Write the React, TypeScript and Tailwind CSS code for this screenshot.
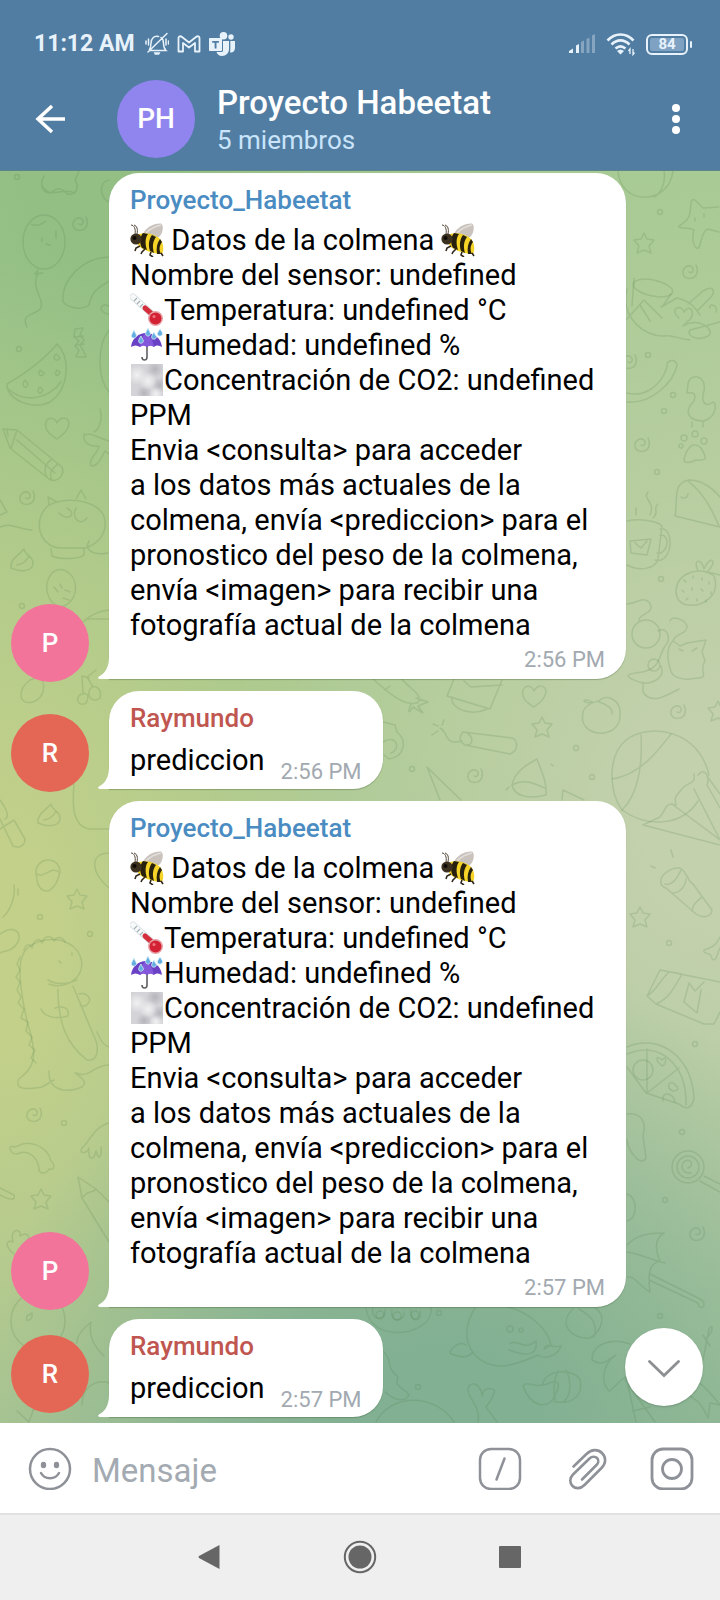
import React from "react";

type Author = { name: string; initial: string; nameClass: string; avatarClass: string };

const BOT: Author = {
  name: "Proyecto_Habeetat",
  initial: "P",
  nameClass: "text-[#4a8cc2]",
  avatarClass: "bg-[#f2749a]",
};
const RAY: Author = {
  name: "Raymundo",
  initial: "R",
  nameClass: "text-[#bf5650]",
  avatarClass: "bg-[#e46756]",
};

function Bee() {
  return (
    <svg viewBox="0 0 34 34" role="img" aria-label="abeja" className="inline-block size-[34px] align-top">
      <path d="M13 11C15 5 24 0 31 0.5C34 2 33 11 29 14C24 16 17 15 13 11Z" fill="#c9c2bd" />
      <path d="M16 10C20 6 26 3 31 2" stroke="#e4dfdb" strokeWidth="1.5" fill="none" />
      <path d="M9 11C15 9 24 11 29 15C34 19 34 28 32 31C25 31 15 28 10 24C6 20 5 14 9 11Z" fill="#f5d327" />
      <path d="M13 10L18 11C15 15 15 21 17 27L12 25C9 20 10 14 13 10ZM22 12L26 14C23 18 22 23 24 30L20 28C18 22 19 16 22 12ZM30 16L32 19C29 23 29 27 31 31L27 31C26 25 27 20 30 16Z" fill="#27200f" />
      <circle cx="6" cy="16" r="5.600" fill="#3c3020" />
      <circle cx="4.500" cy="15" r="2" fill="#0d0a07" />
      <path d="M5 11C6 6 4 2 1 2M7 11C8 6 7 3 4 2" stroke="#54473a" strokeWidth="1" fill="none" />
      <path d="M10 23L6 25L5 28M15 26L12 29L11 31M21 29L20 32L23 34M31 30L33 33" stroke="#30261a" strokeWidth="1.600" fill="none" />
    </svg>
  );
}

function Thermometer() {
  return (
    <svg viewBox="0 0 34 34" role="img" aria-label="termómetro" className="inline-block size-[34px] align-top">
      <path d="M3 4L23 22" stroke="#dbe3e5" strokeWidth="7" strokeLinecap="round" />
      <path d="M3 4L22 21" stroke="#f8fafa" strokeWidth="5" strokeLinecap="round" />
      <path d="M4 8L7 5M7 11L10 8M10 14L13 11" stroke="#a5b1b6" strokeWidth="1.200" />
      <path d="M15 15L23 22" stroke="#d42d3c" strokeWidth="5" strokeLinecap="round" />
      <circle cx="25.500" cy="25.500" r="7.500" fill="#e7a3a8" />
      <circle cx="25.500" cy="25.500" r="6" fill="#d22233" />
      <circle cx="24" cy="23.500" r="1.500" fill="#ef7580" />
    </svg>
  );
}

function Umbrella() {
  return (
    <svg viewBox="0 0 34 34" role="img" aria-label="paraguas con lluvia" className="inline-block size-[34px] align-top">
      <path d="M17 18V29C17 33 12 33 12 29" stroke="#5f6064" strokeWidth="1.600" fill="none" />
      <path d="M1 19C2 10 9 5 16 5C24 5 31 10 32 19C29 17 26 17 24 19C21 17 19 17 17 19C14 17 12 17 10 19C7 17 4 17 1 19Z" fill="#6a41c4" />
      <path d="M10 19C10 12 13 7 16 5C20 8 23 12 24 19C21 17 19 17 17 19C14 17 12 17 10 19Z" fill="#8358da" />
      <path d="M4 2C2 6 1 7 1.500 9C3 11 6 10 6.500 8C6.500 6 5 5 4 2ZM18 0C16 4 15 5 16 7C18 9 20 8 20.500 6C20.500 4 19 3 18 0ZM30 1C28 4 27 5 27.500 7C29 9 32 8 32.500 6C32.500 4 31 3 30 1ZM11 8C9 11 8 13 9 14.500C11 16 13 15 13.500 13C13.500 12 12 11 11 8ZM24 4C22 7 21 9 22 10.500C24 12 26 11 26.500 9C26.500 8 25 7 24 4Z" fill="#63aede" stroke="#d8effa" strokeWidth="0.800" />
    </svg>
  );
}

function Fog() {
  return (
    <svg viewBox="0 0 34 34" role="img" aria-label="niebla" className="inline-block size-[34px] align-top">
      <defs>
        <radialGradient id="fogLight">
          <stop offset="0" stopColor="#f1f1f3" />
          <stop offset="1" stopColor="#f1f1f3" stopOpacity="0" />
        </radialGradient>
        <radialGradient id="fogDark">
          <stop offset="0" stopColor="#b4b4bb" />
          <stop offset="1" stopColor="#b4b4bb" stopOpacity="0" />
        </radialGradient>
        <clipPath id="fogEdge">
          <rect x="1" y="1" width="32" height="32" />
        </clipPath>
      </defs>
      <g clipPath="url(#fogEdge)">
        <rect width="34" height="34" fill="#d4d4d8" />
        <circle cx="25" cy="6" r="9" fill="url(#fogDark)" />
        <circle cx="30" cy="22" r="8" fill="url(#fogDark)" />
        <circle cx="14" cy="30" r="8" fill="url(#fogDark)" />
        <circle cx="7" cy="12" r="10" fill="url(#fogLight)" />
        <circle cx="18" cy="18" r="9" fill="url(#fogLight)" />
        <circle cx="26" cy="31" r="7" fill="url(#fogLight)" />
      </g>
    </svg>
  );
}

const REPORT: React.ReactNode[] = [
  <><Bee /> Datos de la colmena <Bee /></>,
  <>Nombre del sensor: undefined</>,
  <><Thermometer />Temperatura: undefined °C</>,
  <><Umbrella />Humedad: undefined %</>,
  <><Fog />Concentración de CO2: undefined</>,
  <>PPM</>,
  <>Envia &lt;consulta&gt; para acceder</>,
  <>a los datos más actuales de la</>,
  <>colmena, envía &lt;prediccion&gt; para el</>,
  <>pronostico del peso de la colmena,</>,
  <>envía &lt;imagen&gt; para recibir una</>,
  <>fotografía actual de la colmena</>,
];

function Message({ author, time, lines, last }: { author: Author; time: string; lines: React.ReactNode[]; last?: boolean }) {
  const short = lines.length === 1;
  return (
    <li className="flex items-end gap-5 pl-[11px]">
      <div
        className={`flex size-[78px] shrink-0 items-center justify-center rounded-full text-[26px] font-medium text-white ${author.avatarClass} ${last ? "mb-1" : "-mb-[3px]"}`}
      >
        {author.initial}
      </div>
      <article
        className={`relative rounded-[30px] rounded-bl-none bg-white px-[21px] pt-3 shadow-[0_1px_1px_rgba(60,90,50,0.35)] ${short ? "pb-[11px]" : "w-[517px] pb-0.5"}`}
      >
        <svg viewBox="0 0 12 22" className="absolute bottom-0 -left-[11px] h-[22px] w-3 fill-white" aria-hidden="true">
          <path d="M12 0H11C11 9 8 16 1 19.500C-0.500 20.500 0 22 2 22H12Z" />
        </svg>
        <h2 className={`text-[26px] leading-[31px] font-medium ${author.nameClass}`}>{author.name}</h2>
        <div className={short ? "mt-[9px] flex items-end gap-4" : "mt-[7px]"}>
          <div className="text-[29px] leading-[35px] whitespace-nowrap text-black">
            {lines.map((line, i) => (
              <p key={i} className="h-[35px]">{line}</p>
            ))}
          </div>
          <time className={`block text-right text-[22px] leading-[34px] text-[#a2a9b0] ${short ? "-mb-[11px]" : ""}`}>{time}</time>
        </div>
      </article>
    </li>
  );
}

const SPIRAL = "M-1 1C2 3 5-1 2-4C-2-7-8-3-7 3C-5 9 5 9 7 2C8-1 7-4 6-6";
const STAR = "M0-10L3-4L10-3L5 3L7 10L0 7L-7 10L-5 3L-10-3L-3-4Z";
const HEART = "M0 12C-7 8-13 2-11-5C-8-11-2-9 0-4C4-11 11-10 12-4C12 3 6 8 0 12Z";
const LEAF = "M-12 8C-13-1-5-4 1-11C2-4 11-4 10 4C9 12-3 12-12 8ZM-6 5C0 4 4 0 6-4";

function Doodles() {
  const at = (d: string, pts: number[][]) =>
    pts.map(([x, y]) => <path key={`${x}-${y}`} d={d} transform={`translate(${x} ${y})`} />);
  return (
    <svg
      viewBox="0 171 720 1252"
      preserveAspectRatio="xMidYMin slice"
      className="absolute inset-0 size-full fill-none stroke-[#4c7a4a]/18 stroke-[1.5]"
      strokeLinecap="round"
      strokeLinejoin="round"
      aria-hidden="true"
    >
      {at(SPIRAL, [[80, 223], [27, 497], [34, 1114], [690, 271], [642, 444], [678, 711], [475, 775], [697, 1233], [629, 361]])}
      {at(STAR, [[644, 243], [542, 727], [640, 917], [77, 899], [41, 1199], [718, 711]])}
      {at(HEART, [[57, 427], [534, 695]])}
      {at(LEAF, [[23, 560], [50, 815]])}
      {[[17, 177], [19, 349], [22, 606], [660, 212], [648, 355], [673, 395], [664, 411], [657, 472], [661, 579], [576, 748], [592, 777], [412, 769], [669, 943], [695, 1044], [682, 1132], [665, 1200], [40, 917], [90, 934], [64, 1123], [660, 1316], [418, 1387], [439, 1313]].map(([x, y]) => (
        <circle key={`${x}-${y}`} cx={x} cy={y} r="2.500" />
      ))}
      <path d="M44 176C38 186 45 196 52 192C58 187 62 188 67 194C76 196 80 187 75 180L79 171M43 187C50 199 62 187 75 193" />
      <ellipse cx="44" cy="242" rx="21" ry="27" />
      <path d="M31 224C37 228 43 223 46 221M56 231V238M42 238V241M46 244L50 245M38 270L35 274L43 273M38 273C30 290 45 298 41 308C35 316 20 313 27 327" />
      <path d="M109 257C82 258 61 280 63 302C70 309 82 310 89 305C92 290 100 287 109 281M109 306C99 302 98 313 109 314M109 180C98 182 100 198 109 202M109 330C97 345 97 378 109 392" />
      <path d="M57 344C48 355 31 370 7 384C6 399 32 411 50 402C68 390 72 360 57 344ZM7 388C25 405 49 398 61 382M25 380C20 386 27 391 28 384ZM40 370C36 375 43 378 44 373ZM56 354C51 358 57 363 60 358ZM40 387C35 392 41 396 43 390ZM57 370C53 375 58 378 60 372Z" />
      <path d="M75 329L83 328L80 335L84 340L80 345L84 352L86 357L76 357L79 350L75 346L79 341L74 337ZM75 337L83 336M77 345L84 344" />
      <path d="M3 429L17 430L62 467C65 474 58 484 49 479L10 448ZM7 430L8 436M17 430L11 448M17 440L55 473M51 460C44 464 44 472 47 477M58 464C51 469 49 475 52 480" />
      <path d="M84 434C82 444 92 447 99 446C98 454 88 458 91 466C98 467 102 456 105 451L109 454M84 435C93 432 97 438 109 441M100 409C103 419 99 430 94 432" />
      <path d="M49 505C33 517 37 546 60 548H85C108 541 111 516 96 507C82 498 62 499 49 505ZM49 505L48 497L57 502M76 499L81 490L86 499M59 513C69 523 77 513 67 508M76 508C71 518 80 527 87 518M51 549L52 556C60 560 80 559 84 555V548M89 541C84 550 93 556 108 553" />
      <path d="M0 500L7 512L0 515M0 527C12 522 20 530 32 530" />
      <path d="M52 573C42 585 47 604 61 607C77 603 80 582 69 573C63 568 56 569 52 573ZM54 587L58 592M60 584L62 588M63 598L69 600M65 590L70 592M82 623C89 616 98 611 109 610M86 619L109 619" />
      <path d="M82 694C73 697 79 708 86 703C90 696 87 692 82 694ZM92 687C84 693 92 705 100 698C102 690 97 685 92 687ZM83 693L82 676L89 678M93 687L87 677L96 670M30 680C18 688 17 706 33 702C46 697 46 681 39 677Z" />
      <path d="M0 800C6 808 10 817 5 819M0 819L13 846C20 849 25 845 25 839L14 820L0 829M74 783C72 808 73 826 89 829H109M109 853C91 853 89 871 109 888" />
      <path d="M36 873C35 858 58 854 60 871C58 884 51 892 45 891C38 889 37 882 36 873ZM36 873C43 881 51 864 60 873M14 885C16 897 10 911 3 917M18 889V895M0 934C13 925 22 931 18 942C12 952 6 950 0 953" />
      <path d="M22 957C26 942 48 937 63 941C81 947 86 964 78 976C71 985 58 988 49 984M22 957C17 970 22 1005 31 1035C36 1057 35 1067 19 1079C13 1091 30 1089 42 1087L54 1080M49 1071C48 1090 65 1094 82 1087C89 1082 80 1077 75 1073M58 989C58 1022 66 1044 87 1060C100 1062 99 1045 93 1034L73 986M41 1009C46 1020 62 1018 68 1016C70 1007 62 1006 55 1008M79 994C87 992 91 998 89 1002C85 1009 80 1005 80 1005M76 1073C90 1079 93 1065 109 1065M97 1032C101 1041 103 1045 109 1047M48 980C58 986 70 983 77 980M59 961L61 963M72 953V955" />
      <path d="M24 950C26 944 30 943 32 948C34 938 41 938 42 943C45 934 52 936 54 941C58 934 64 939 65 942M20 957L17 964L20 970L16 977L20 982L17 990L21 997L18 1003L24 1009L21 1018L28 1022L26 1031L32 1037L29 1045L35 1050L31 1058L36 1063" />
      <path d="M14 1147C7 1143 10 1155 17 1154C27 1149 37 1156 39 1168C38 1175 47 1174 49 1169C56 1171 54 1163 51 1161C47 1144 26 1140 18 1146Z" />
      <path d="M109 1123C94 1127 90 1141 82 1148C78 1156 89 1152 89 1148C88 1162 94 1160 96 1151C99 1162 102 1156 101 1147M78 1177L96 1189L109 1202M78 1177L82 1198L109 1242M82 1198C90 1188 93 1194 96 1189M0 1188L14 1195C16 1201 9 1200 0 1195M14 1254C5 1247 5 1239 13 1242C9 1228 22 1228 20 1236C30 1230 31 1240 25 1243" />
      <ellipse cx="38" cy="1321" rx="27" ry="29" />
      <path d="M27 1316C25 1324 33 1320 32 1313ZM77 1343C76 1335 86 1326 91 1322C88 1336 95 1348 104 1356M17 1411L29 1422L35 1405M82 1405C83 1378 109 1380 109 1384" />
      <path d="M618 171C620 206 669 206 673 171M664 171C666 183 661 193 654 197M691 203Q692 197 696 201L703 208L719 207M691 203C690 214 691 219 679 226C677 229 690 227 694 230C690 243 698 255 700 244C703 235 704 230 708 229L719 232M695 218V221M704 214V217" />
      <ellipse cx="653" cy="288" rx="20" ry="8" transform="rotate(12 653 288)" />
      <path d="M627 289C620 319 646 337 664 336M627 319L644 300L662 318M634 278L632 306M640 305L650 321M671 294L662 307M679 318C668 309 681 303 684 312C692 301 696 317 688 321L683 326C700 315 719 333 706 337C696 341 686 335 690 330L720 322M661 307L677 298C690 301 694 306 700 315M688 304L703 291C714 284 717 292 708 300L697 311M710 308C709 302 719 306 716 312M664 336C672 334 678 339 690 340" />
      <path d="M627 402C653 404 674 381 677 365C675 358 666 360 667 367C660 389 642 397 627 393M687 393C691 393 697 391 694 401C682 413 690 421 704 421C718 416 716 402 713 402C704 409 701 400 704 391C707 374 689 373 688 384ZM692 422V427M703 422V427" />
      <path d="M684 459C687 448 693 440 701 448C707 458 708 461 696 460C688 464 684 463 684 459Z" />
      <circle cx="684" cy="438" r="3" /><circle cx="695" cy="434" r="3" /><circle cx="704" cy="441" r="3" /><circle cx="681" cy="446" r="2" />
      <path d="M675 516C678 500 672 483 689 480C703 480 714 490 720 497M675 516L720 527M688 481C703 493 711 507 719 526M681 497C685 499 687 498 688 494" />
      <path d="M627 521C640 518 657 521 662 526L658 559C655 570 638 571 627 565M660 535C672 534 667 556 657 553M660 529C675 526 673 565 655 560M630 541L651 539L647 555L631 553ZM635 543L641 548L647 541M648 492C642 499 656 502 650 515M658 504C652 508 660 512 653 518M636 508V515" />
      <path d="M676 590C678 572 700 566 714 576C721 595 703 607 688 605C680 604 676 599 676 590ZM698 571C692 559 702 558 704 569C710 554 719 561 707 572L720 575" />
      <path d="M684 580L686 582M693 576V578M702 578V580M709 582V584M682 590L684 592M692 588V590M701 589L703 591M711 592V594M686 600L688 598M697 599V601M706 600V602" />
      <circle cx="646" cy="634" r="14" />
      <path d="M627 604C640 602 642 597 649 602C657 614 639 613 639 620M658 631C669 625 671 642 665 646C658 657 661 668 642 672C623 674 624 677 642 683C652 684 666 678 661 666M670 621C671 615 685 619 687 626C687 635 675 633 673 641M673 641L680 646L687 643L706 640L702 652L705 661C698 672 710 677 698 678C683 681 671 678 670 668C666 656 668 645 673 641M679 649L683 651M692 651L697 648M643 682V692C651 705 666 696 679 689" />
      <circle cx="654" cy="665" r="6" />
      <path d="M583 713C577 737 618 741 620 717C622 699 606 693 599 701C592 702 584 706 583 713ZM592 703C580 703 583 697 592 702M599 702C607 704 613 709 612 714" />
      <path d="M622 810C609 792 607 756 626 740C650 722 699 730 709 775M622 810C649 829 683 825 698 801" />
      <path d="M612 779C641 775 660 748 671 734M641 735C643 770 636 797 622 810M698 775C705 766 710 778 707 785L720 808M694 774C696 786 688 780 681 790C676 797 674 795 676 805C664 802 667 809 660 817L643 825L720 845M694 789L720 840M672 804L720 840M707 776L720 794" />
      <path d="M661 883C659 876 670 867 680 868C689 874 686 880 693 884L712 910C711 918 702 918 696 914L666 888C663 887 661 886 661 883ZM665 884C674 887 679 874 681 870M672 893C683 893 686 882 686 879M692 911C693 901 701 900 702 896M651 866L655 868M671 850L673 857" />
      <path d="M647 996L660 970L720 982M720 1012L714 1024H704L656 1004L647 996M660 970L682 974C673 990 669 998 656 1004M669 972C660 980 657 990 647 996M689 983L684 1002L697 1013L701 990M689 983L695 991L704 982M720 937C717 942 717 946 704 950C703 956 711 950 712 959C717 963 718 950 720 948" />
      <path d="M627 1047C655 1034 691 1052 694 1098C692 1109 686 1110 679 1104L646 1093L627 1067M627 1054C661 1040 687 1066 686 1105M647 1049V1093L679 1068" />
      <circle cx="643" cy="1070" r="10" /><path d="M658 1062C655 1055 660 1058 662 1060C667 1054 667 1064 662 1066ZM669 1088C667 1082 673 1081 676 1086C682 1089 673 1094 669 1088ZM663 1101C661 1090 674 1093 675 1102M627 1114C641 1112 647 1122 643 1136L646 1158C640 1168 628 1150 627 1140" />
      <circle cx="688" cy="1167" r="16" /><circle cx="688" cy="1167" r="11" />
      <path d="M688 1168C694 1166 692 1158 685 1161C679 1166 683 1174 691 1173M704 1176L720 1184M700 1181L720 1192M627 1194C638 1197 638 1219 627 1221M627 1245C636 1235 649 1233 664 1233C652 1240 657 1254 660 1261C651 1263 647 1270 650 1292C637 1284 635 1276 627 1277M627 1252C640 1254 652 1260 665 1263M650 1274L702 1300C708 1307 699 1311 698 1303L649 1280" />
      <path d="M366 1308C370 1344 428 1336 431 1312V1306M373 1307C370 1323 387 1320 385 1310M392 1310C389 1324 405 1322 404 1312M411 1310C410 1325 423 1321 420 1311" />
      <circle cx="380" cy="1315" r="4" /><circle cx="397" cy="1316" r="4" /><circle cx="415" cy="1315" r="4" />
      <path d="M475 1308C455 1340 475 1367 503 1366C516 1365 529 1359 538 1355C544 1360 558 1356 561 1346C553 1349 547 1341 544 1349L551 1345C548 1329 528 1311 507 1307M466 1345C459 1340 447 1351 451 1354C461 1357 467 1359 473 1352M510 1343C520 1340 525 1351 536 1341C538 1355 528 1357 509 1350" />
      <circle cx="510" cy="1329" r="3" /><circle cx="521" cy="1330" r="2" />
      <path d="M573 1309C557 1324 572 1340 590 1338C602 1331 607 1315 595 1308M579 1309C593 1317 598 1325 594 1337" />
      <path d="M542 1385C547 1368 572 1369 580 1379C584 1397 571 1404 556 1402M566 1370C572 1382 571 1397 563 1402M558 1371C554 1378 553 1386 555 1402M523 1386C528 1379 534 1391 552 1382C559 1380 560 1386 556 1393C550 1412 530 1407 523 1386Z" />
      <path d="M592 1360C592 1342 615 1338 630 1344M592 1360C604 1367 605 1361 616 1355C603 1363 600 1382 609 1391C614 1389 619 1380 626 1377L636 1422M625 1380L655 1422M632 1411L650 1407M703 1360L709 1329C713 1323 714 1330 707 1338M703 1335L710 1346M698 1382C706 1387 712 1395 720 1405L710 1403L708 1418C703 1409 702 1403 690 1396" />
      <path d="M384 1352C394 1362 384 1365 398 1377C394 1388 403 1386 409 1395C404 1404 393 1399 385 1392M376 1422C391 1393 435 1393 454 1422M478 1422C482 1405 462 1394 470 1385C477 1380 482 1391 482 1396C483 1385 498 1388 494 1393C492 1400 488 1404 486 1407L497 1422" />
      <path d="M373 679C391 695 404 706 417 703C425 695 408 688 402 679M385 690L390 686M416 698L428 702L418 706L423 713L413 707C409 713 407 715 411 704M454 679L447 696L490 709L502 680M464 681L471 687L502 685M452 697C450 710 473 716 487 709" />
      <path d="M463 732C458 738 460 742 465 745L510 754C520 750 517 739 512 738ZM467 733C475 738 472 746 466 745M462 741C443 746 449 732 440 728M438 726L433 724M438 731L432 735M442 725L444 720M427 767L434 774L461 800M427 767L440 800M512 785C515 770 530 763 537 759C541 771 547 781 546 795C526 800 514 795 512 785ZM512 785C525 778 535 784 545 788M509 787L506 790M551 764L553 766M562 800L563 790L584 800M383 722L395 725L397 732C408 741 404 757 389 759L384 755M383 742C397 733 401 750 391 753" />
    </svg>
  );
}

function StatusBar() {
  return (
    <div className="flex h-[68px] items-center justify-between pt-5 pr-7 pl-[34px] text-[#e8f2fb]">
      <div className="flex items-center">
        <span className="text-[23px] leading-7 font-bold">11:12 AM</span>
        <svg viewBox="0 0 24 24" className="ml-2.5 size-6 fill-none stroke-current stroke-[1.5]" aria-hidden="true">
          <path d="M5 18.500H21C19 16.500 18.500 15 18.500 11C18.500 8.500 17.500 6.500 16 5.500M13.500 4.500C9 3 6 7 6 11C6 15 5.500 16 4.500 17.500M22 1.500L3 20M3.500 7V13M1 9V12M21 7V13M23.500 9V12" strokeLinecap="round" />
          <path d="M9 20.500H15L14 22.500H10Z" fill="currentColor" strokeWidth="0.500" />
        </svg>
        <svg viewBox="0 0 24 18" className="ml-2 h-[18px] w-6 fill-none stroke-current stroke-[1.800]" aria-hidden="true">
          <path d="M1.500 16.500V3C1.500 1 3.500 0.800 5 2L12 7.500L19 2C20.500 0.800 22.500 1 22.500 3V16.500H18V8L12 12.500L6 8V16.500Z" strokeLinejoin="round" />
        </svg>
        <svg viewBox="0 0 26 24" className="ml-2 h-6 w-[26px] fill-current" aria-hidden="true">
          <circle cx="14.500" cy="3.800" r="3.800" /><circle cx="22" cy="5" r="2.700" />
          <path d="M14 9H20V17C20 21 17 24 13 24C10 24 8 22 7.500 20H12.500C14 20 14 19 14 18ZM21.300 9H26V16C26 19 24 21 21 20.500C21.600 18 21.300 13 21.300 9Z" />
          <path fillRule="evenodd" d="M1 6H12C12.700 6 13 6.500 13 7V18C13 18.700 12.500 19 12 19H1C0.300 19 0 18.500 0 18V7C0 6.300 0.500 6 1 6ZM3.200 9V10.700H5.600V16.500H7.500V10.700H9.900V9Z" />
        </svg>
      </div>
      <div className="flex items-center gap-2.5">
        <svg viewBox="0 0 28 20" className="h-5 w-7 fill-current" aria-hidden="true">
          <path d="M1 19V17L5 14.500V19ZM8 19V11.500L11 10V19Z" />
          <path d="M13 19V8L16 6.500V19ZM18.500 19V5L21.500 3.500V19ZM24 19V1.500L27 0V19Z" opacity="0.35" />
        </svg>
        <svg viewBox="0 0 30 24" className="h-6 w-[30px] fill-none stroke-current stroke-[2.600]" aria-hidden="true">
          <path d="M1.500 8.500C9 0.500 20 0.500 27.500 8.500M5.500 12.500C11 7 18 7 23.500 12.500M9.500 16.500C13 13.500 16 13.500 19.500 16.500" />
          <path d="M11 19C13.500 17 15.500 17 18 19L14.500 22.500Z" fill="currentColor" stroke="none" />
          <path d="M24 22V17L22.500 19M27 17V22.500L28.500 20.500" strokeWidth="1.300" />
        </svg>
        <div className="flex items-center gap-0.5">
          <div className="flex h-[21px] w-[42px] items-center justify-center rounded-md border-2 border-current p-0.5">
            <span className="flex h-full w-full items-center justify-center rounded-xs bg-[#7fa2c3] text-[15px] leading-none font-bold">84</span>
          </div>
          <span className="h-[7px] w-0.5 rounded-full bg-current" />
        </div>
      </div>
    </div>
  );
}

export default function App() {
  return (
    <div className="flex min-h-screen flex-col bg-white font-['Roboto','Liberation_Sans',sans-serif]">
      <header className="z-10 border-b border-[#5d8587] bg-[#517da2]">
        <StatusBar />
        <div className="flex h-[102px] items-center pr-[22px] pl-[34px]">
          <button type="button" aria-label="Volver" className="flex size-9 items-center text-white">
            <svg viewBox="0 0 32 32" className="size-8 fill-none stroke-current stroke-[3.500]">
              <path d="M31 16H4M18 3L4 16L18 29" />
            </svg>
          </button>
          <div className="ml-[47px] flex size-[78px] shrink-0 items-center justify-center rounded-full bg-[#9085ee] text-[28px] font-medium text-white">PH</div>
          <div className="ml-[22px] min-w-0 flex-1 pt-1">
            <h1 className="truncate text-[33px] leading-[38px] font-medium text-white">Proyecto Habeetat</h1>
            <p className="text-[26px] leading-9 text-[#c9e4fb]">5 miembros</p>
          </div>
          <button type="button" aria-label="Más opciones" className="flex size-11 items-center justify-center text-white">
            <svg viewBox="0 0 8 30" className="h-[30px] w-2 fill-current">
              <circle cx="4" cy="4" r="4" /><circle cx="4" cy="15" r="4" /><circle cx="4" cy="26" r="4" />
            </svg>
          </button>
        </div>
      </header>

      <main className="relative flex-1 overflow-hidden bg-[radial-gradient(ellipse_65%_40%_at_62%_102%,#82b092_20%,#82b09200),radial-gradient(ellipse_50%_55%_at_0%_62%,#c2d08a_15%,#c2d08a00),radial-gradient(ellipse_70%_52%_at_100%_52%,#c3d1ad_15%,#c3d1ad00),radial-gradient(ellipse_60%_50%_at_12%_0%,#93bf85_15%,#93bf8500),linear-gradient(180deg,#a8ca94_0%,#a9c98e_45%,#9abd97_100%)]">
        <Doodles />
        <ul className="relative flex flex-col gap-3 pt-0.5 pb-1.5">
          <Message author={BOT} time="2:56 PM" lines={REPORT} />
          <Message author={RAY} time="2:56 PM" lines={["prediccion"]} />
          <Message author={BOT} time="2:57 PM" lines={REPORT} />
          <Message author={RAY} time="2:57 PM" lines={["prediccion"]} last />
        </ul>
        <button
          type="button"
          aria-label="Ir al final"
          className="absolute right-[17px] bottom-[17px] flex size-[78px] items-center justify-center rounded-full bg-white text-[#8d9093] shadow-[0_1px_2px_rgba(60,90,70,0.35)]"
        >
          <svg viewBox="0 0 32 18" className="mt-1 h-[18px] w-8 fill-none stroke-current stroke-[2.800]">
            <path d="M1.500 1.500L16 15.500L30.500 1.500" strokeLinecap="round" />
          </svg>
        </button>
      </main>

      <form className="flex h-[90px] items-center pr-[26px] pl-7 text-[#8e9298]" onSubmit={(e) => e.preventDefault()}>
        <button type="button" aria-label="Emojis" className="shrink-0">
          <svg viewBox="0 0 44 44" className="size-11 fill-none stroke-current stroke-[2.500]">
            <circle cx="22" cy="23" r="20" />
            <path d="M13 27C17 34 27 34 31 27" strokeLinecap="round" />
            <ellipse cx="15.500" cy="19" rx="2.700" ry="3.300" fill="currentColor" stroke="none" />
            <ellipse cx="28.500" cy="19" rx="2.700" ry="3.300" fill="currentColor" stroke="none" />
          </svg>
        </button>
        <input
          type="text"
          aria-label="Mensaje"
          placeholder="Mensaje"
          className="ml-5 min-w-0 flex-1 bg-transparent pt-1.5 text-[33px] leading-10 text-black outline-none placeholder:text-[#a3aab1]"
        />
        <div className="flex shrink-0 items-center gap-[42px]">
          <button type="button" aria-label="Comandos">
            <svg viewBox="0 0 44 44" className="size-11 fill-none stroke-current stroke-[2.500]">
              <rect x="2" y="3" width="40" height="40" rx="11" />
              <path d="M26.500 12.500L18.500 33.500" strokeLinecap="round" />
            </svg>
          </button>
          <button type="button" aria-label="Adjuntar">
            <svg viewBox="0 0 44 44" className="size-11 fill-none stroke-current stroke-[2.600]" strokeLinecap="round">
              <path d="M9.500 20.500L22.500 8C27.500 3 34 3 38 7C42.500 11.500 42 17.500 37.500 22L20.500 39C16.500 43 11.500 43 8.500 40C5.500 37 5.500 32 9 28.500L25.500 12.500C28 10 31.500 10.500 33 12C35 14 34.500 17 32.500 19L18 33.500" />
            </svg>
          </button>
          <button type="button" aria-label="Cámara">
            <svg viewBox="0 0 44 44" className="size-11 fill-none stroke-current stroke-[2.800]">
              <rect x="2" y="3" width="40" height="40" rx="11" />
              <circle cx="22" cy="23" r="9.500" />
            </svg>
          </button>
        </div>
      </form>

      <nav aria-label="Sistema" className="flex h-[87px] items-center justify-center border-t-2 border-[#e0e0e0] bg-[#efefef] pb-0.5 text-[#666666]">
        <button type="button" aria-label="Atrás" className="flex w-[150px] justify-center">
          <svg viewBox="0 0 24 26" className="h-[26px] w-6 fill-current"><path d="M21.500 1V25L1 14Q0 13 1 12Z" /></svg>
        </button>
        <button type="button" aria-label="Inicio" className="flex w-[150px] justify-center">
          <svg viewBox="0 0 34 34" className="size-[34px]">
            <circle cx="17" cy="17" r="15.200" className="fill-none stroke-current stroke-2" />
            <circle cx="17" cy="17" r="11.500" className="fill-current" />
          </svg>
        </button>
        <button type="button" aria-label="Recientes" className="flex w-[150px] justify-center">
          <svg viewBox="0 0 22 22" className="size-[22px] fill-current"><rect width="22" height="22" rx="1" /></svg>
        </button>
      </nav>
    </div>
  );
}
